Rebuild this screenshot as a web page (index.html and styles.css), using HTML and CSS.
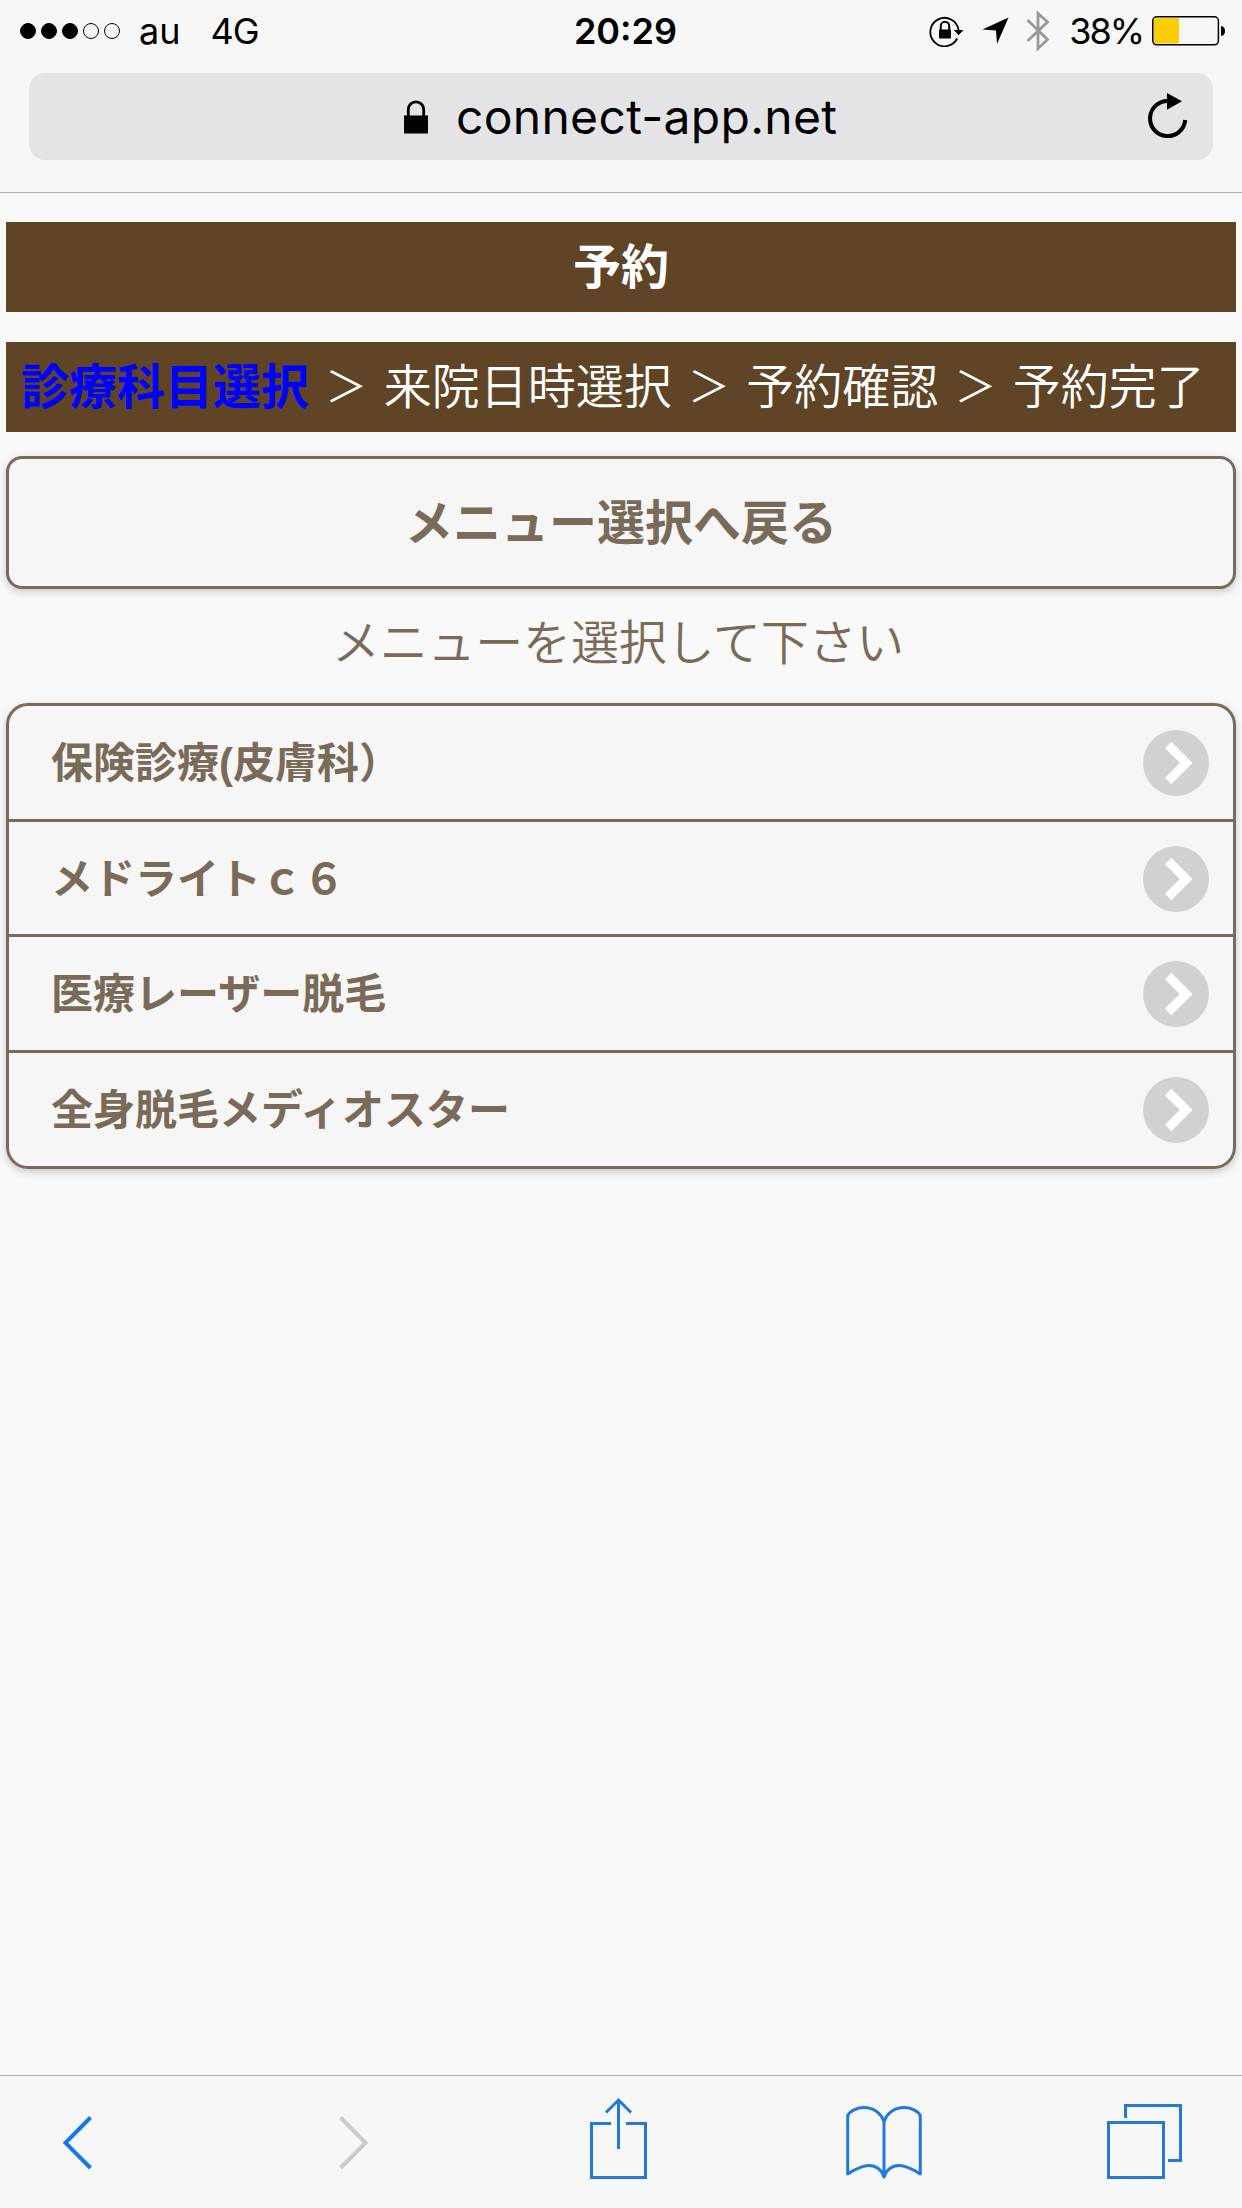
FILE: index.html
```html
<!DOCTYPE html>
<html lang="ja">

<head>
    <meta charset="UTF-8">
    <meta name="viewport" content="width=device-width, initial-scale=1.0">
    <title>予約</title>
    <link rel="stylesheet" href="styles.css">
</head>

<body>

    <header class="browser-header">
        <div class="status-bar">
            <div class="status-left">
                <div class="signal">
                    <span class="dot full"></span>
                    <span class="dot full"></span>
                    <span class="dot full"></span>
                    <span class="dot"></span>
                    <span class="dot"></span>
                </div>
                <span class="carrier">au</span>
                <span class="network">4G</span>
            </div>
            <div class="time">20:29</div>
            <div class="status-right">
                <svg class="rotation-lock" width="36" height="32" viewBox="0 0 36 32">
                    <path d="M28.200 23.500A14.200 14.200 0 1 1 29.600 15" fill="none" stroke="#000" stroke-width="1.800" />
                    <path d="M24.800 15H34.500L29.600 20.300Z" />
                    <rect x="10" y="14.500" width="12" height="9" rx="1" />
                    <path d="M11.800 15V11A4.200 4.200 0 0 1 20.200 11V15" fill="none" stroke="#000" stroke-width="2" />
                </svg>
                <svg class="location" width="27" height="28" viewBox="0 0 27 28">
                    <path d="M26.500 0.500L15 27L14 13.500L0.500 12.500Z" />
                </svg>
                <svg class="bluetooth" width="24" height="42" viewBox="0 0 24 42">
                    <path d="M1.500 10L21.500 29.500L12 38.500V3.500L21.500 12L1.500 31" fill="none" stroke="#999" stroke-width="2.800" />
                </svg>
                <span class="percent">38%</span>
                <svg class="battery" width="74" height="30" viewBox="0 0 74 30">
                    <rect x="0.800" y="0.800" width="65.600" height="28" rx="4" fill="none" stroke="#000" stroke-width="1.500" />
                    <rect x="2" y="2" width="25" height="25.500" rx="2" fill="#fc0" />
                    <path d="M69 10Q73 10.500 73 15T69 20Z" />
                </svg>
            </div>
        </div>
        <div class="address-bar">
            <svg class="lock" width="24" height="34" viewBox="0 0 24 34">
                <rect y="15.500" width="24" height="18" />
                <path d="M4.300 16V9.500A7.700 7.700 0 0 1 19.700 9.500V16" fill="none" stroke="#000" stroke-width="2.800" />
            </svg>
            <span class="url">connect-app.net</span>
            <svg class="reload" width="40" height="47" viewBox="0 0 40 47">
                <path d="M37.200 27A17.600 17.600 0 1 1 20.500 7.900" fill="none" stroke="#000" stroke-width="4" />
                <path d="M19 0L34 8.300L19 16.800Z" />
            </svg>
        </div>
    </header>

    <main class="page">
        <h1 class="title">予約</h1>
        <div class="steps"><b class="current">診療科目選択</b> <span class="sep">＞</span> 来院日時選択 <span class="sep">＞</span> 予約確認 <span class="sep">＞</span> 予約完了</div>
        <a class="back-button">メニュー選択へ戻る</a>
        <p class="message">メニューを選択して下さい</p>
        <ul class="menu">
            <li>
                <span>保険診療(皮膚科）</span>
                <svg class="arrow" viewBox="0 0 66 66">
                    <circle cx="33" cy="33" r="33" />
                    <path d="M25.200 15L43.200 33L25.200 51" />
                </svg>
            </li>
            <li>
                <span>メドライトｃ６</span>
                <svg class="arrow" viewBox="0 0 66 66">
                    <circle cx="33" cy="33" r="33" />
                    <path d="M25.200 15L43.200 33L25.200 51" />
                </svg>
            </li>
            <li>
                <span>医療レーザー脱毛</span>
                <svg class="arrow" viewBox="0 0 66 66">
                    <circle cx="33" cy="33" r="33" />
                    <path d="M25.200 15L43.200 33L25.200 51" />
                </svg>
            </li>
            <li>
                <span>全身脱毛メディオスター</span>
                <svg class="arrow" viewBox="0 0 66 66">
                    <circle cx="33" cy="33" r="33" />
                    <path d="M25.200 15L43.200 33L25.200 51" />
                </svg>
            </li>
        </ul>
    </main>

    <nav class="toolbar">
        <svg class="prev" width="30" height="82" viewBox="0 0 30 82">
            <path d="M28.500 20.500L3.500 45.800L28.500 71" />
        </svg>
        <svg class="next" width="30" height="82" viewBox="0 0 30 82">
            <path d="M1.500 20.500L26.500 45.800L1.500 71" />
        </svg>
        <svg class="share" width="57" height="82" viewBox="0 0 57 82">
            <path d="M21 26.500H1.500V80.500H55.500V26.500H36M28.500 52V3M16 15.500L28.500 3L41 15.500" />
        </svg>
        <svg class="bookmarks" width="76" height="82" viewBox="0 0 76 82">
            <path d="M38 25C35 15 26 10.500 18 10.500C11 10.500 4 14 1.700 18.500V77C8 73 15 68.500 23 68.500C30 68.500 36 73 38 80C40 73 46 68.500 53 68.500C61 68.500 68 73 74.300 77V18.500C72 14 65 10.500 58 10.500C50 10.500 41 15 38 25V79" stroke-linejoin="round" />
        </svg>
        <svg class="tabs" width="75" height="82" viewBox="0 0 75 82">
            <path d="M1.500 25.500H56.500V80.500H1.500ZM18.500 21V8.500H73.500V63.500H61" />
        </svg>
    </nav>

</body>

</html>
```
FILE: styles.css
```css
* {
    box-sizing: border-box;
}

body {
    margin: 0;
    min-height: 100vh;
    display: flex;
    flex-direction: column;
    background: #f9f9f9;
    color: #7a6a58;
    font-family: "Noto Sans CJK JP", sans-serif;
}

svg {
    display: block;
    flex: none;
}

/* browser header */
.browser-header {
    height: 193px;
    background: #f7f7f7;
    border-bottom: 1px solid #acacac;
    color: #000;
    font-family: Inter, sans-serif;
}

.status-bar {
    display: grid;
    grid-template-columns: 1fr auto 1fr;
    align-items: center;
    height: 73px;
    padding: 0 16px 11px 20px;
    font-size: 36px;
}

.status-left,
.status-right,
.signal {
    display: flex;
    align-items: center;
}

.status-right {
    justify-content: flex-end;
}

.signal {
    gap: 5px;
    margin-right: 19px;
}

.dot {
    width: 16px;
    height: 16px;
    border: 1px solid #000;
    border-radius: 50%;
}

.dot.full {
    background: #000;
}

.carrier {
    margin-right: 30px;
}

.network {
    letter-spacing: -1px;
}

.time {
    margin-left: 5px;
    font-weight: 600;
}

.location {
    margin-left: 17px;
}

.bluetooth {
    margin-left: 17px;
}

.percent {
    margin: 0 9px 0 19px;
    letter-spacing: -2px;
}

.address-bar {
    display: flex;
    align-items: center;
    height: 87px;
    margin: 0 29px;
    padding: 0 25px 0 375px;
    border-radius: 16px;
    background: #e4e4e6;
    font-size: 48px;
}

.url {
    margin-left: 28px;
    letter-spacing: 0.3px;
}

.reload {
    margin-left: auto;
}

/* page */
.page {
    flex: 1;
    padding: 29px 6px 0;
    font-size: 48px;
}

.title,
.steps {
    height: 90px;
    margin: 0 0 30px;
    background: #5f4426;
    color: #fff;
    font-size: 48px;
    line-height: 83px;
}

.title {
    text-align: center;
    font-weight: bold;
}

.steps {
    margin-bottom: 24px;
    padding-left: 15px;
    font-weight: 350;
    white-space: nowrap;
    word-spacing: 2.6px;
}

.current {
    color: #00f;
    font-weight: bold;
}

.sep {
    display: inline-block;
    width: 48px;
    font-size: 42px;
    line-height: 1;
    text-align: center;
    vertical-align: 2px;
}

.back-button {
    display: block;
    height: 133px;
    border: 3px solid #786b5b;
    border-radius: 16px;
    background: #f6f6f6;
    box-shadow: 0 3px 9px rgba(0, 0, 0, 0.2);
    font-weight: bold;
    line-height: 121px;
    text-align: center;
}

.message {
    height: 114px;
    margin: 0;
    padding-right: 6px;
    font-weight: 350;
    letter-spacing: -0.2px;
    line-height: 100px;
    text-align: center;
}

.menu {
    margin: 0;
    padding: 0;
    list-style: none;
    border: 3px solid #786b5b;
    border-radius: 22px;
    background: #f6f6f6;
    box-shadow: 0 3px 9px rgba(0, 0, 0, 0.2);
    font-family: "Liberation Sans", "Noto Sans CJK JP", sans-serif;
    font-size: 42px;
    font-weight: bold;
}

.menu li {
    display: flex;
    align-items: center;
    justify-content: space-between;
    height: 115.7px;
    padding: 1px 24px 0 42px;
    border-bottom: 3px solid #786b5b;
}

.menu li:last-child {
    height: 113px;
    border-bottom: none;
}

.menu span {
    padding-bottom: 7px;
}

.arrow {
    width: 66px;
    height: 66px;
    fill: #d1d1d1;
}

.arrow path {
    fill: none;
    stroke: #fff;
    stroke-width: 9;
}

/* bottom toolbar */
.toolbar {
    display: flex;
    height: 133px;
    padding: 21px 0 0 62px;
    border-top: 1px solid #a8aaa8;
    background: #f7f7f7;
}

.toolbar path {
    fill: none;
    stroke: #2378dc;
    stroke-width: 3;
}

.toolbar .prev path {
    stroke: #1677ea;
    stroke-width: 4;
}

.toolbar .next path {
    stroke: #ccc;
    stroke-width: 4;
}

.next {
    margin-left: 247px;
}

.share {
    margin-left: 221px;
}

.bookmarks {
    margin-left: 199px;
}

.tabs {
    margin-left: 185px;
}
```
